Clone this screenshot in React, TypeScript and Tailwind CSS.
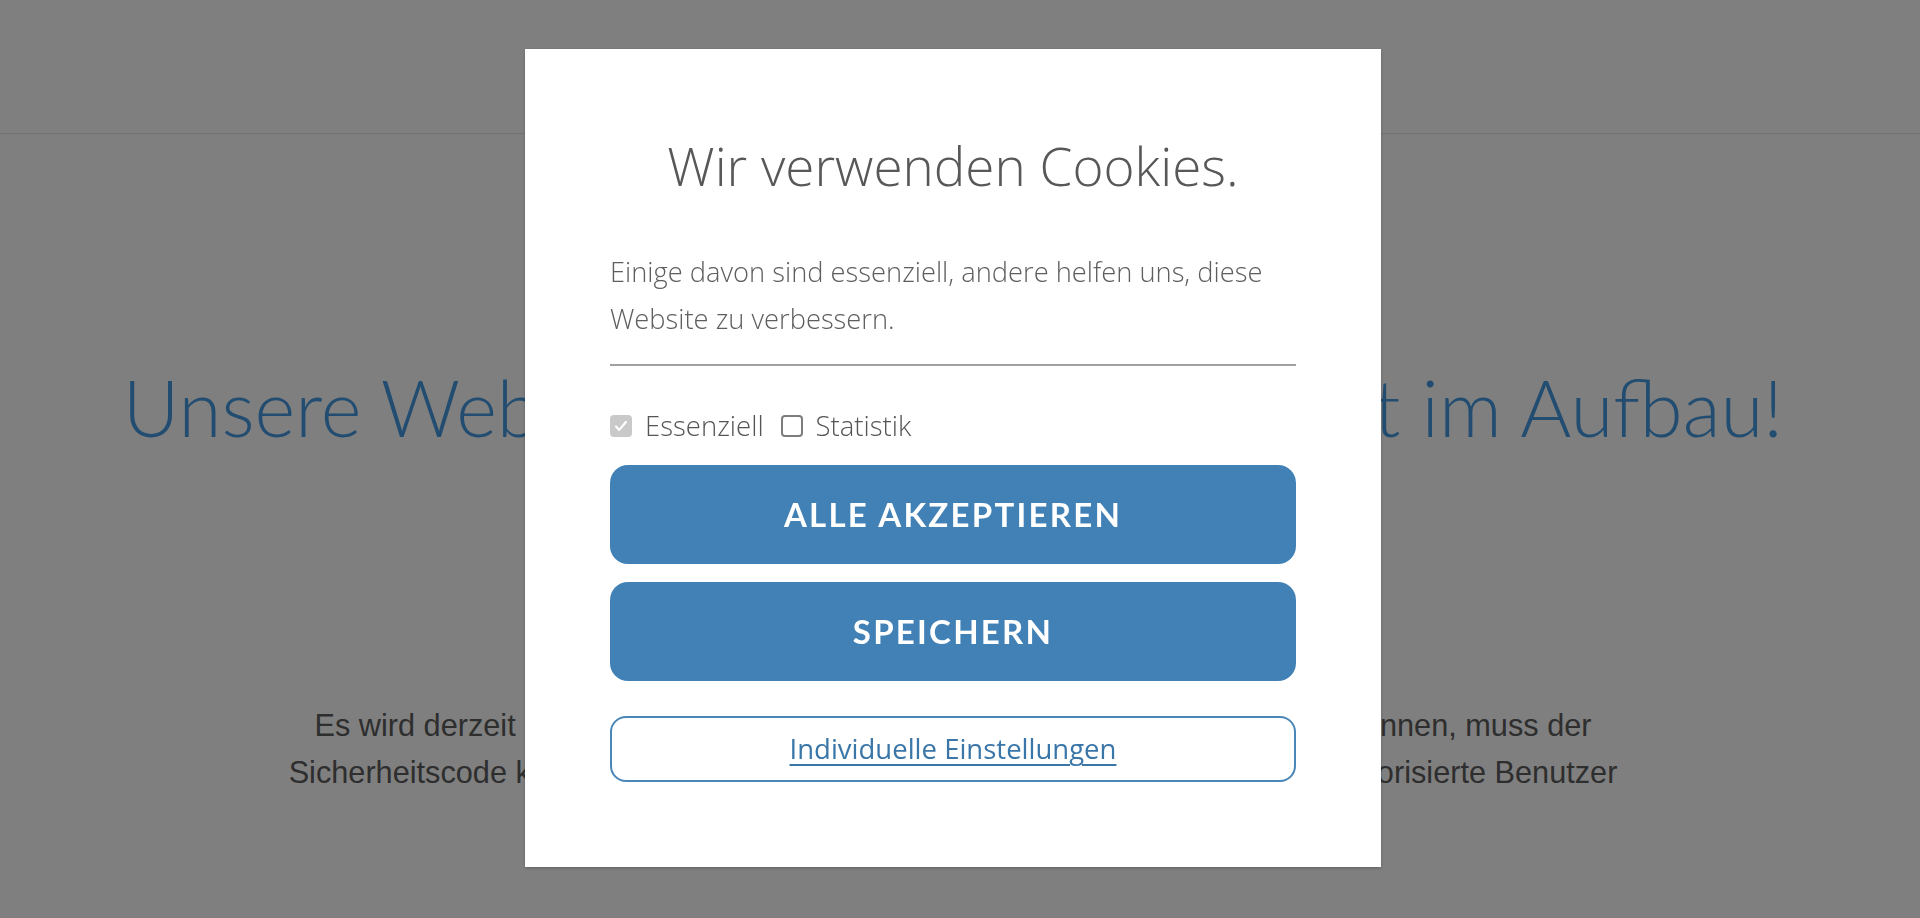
import React from 'react';

const CheckBox: React.FC<{ checked?: boolean; disabled?: boolean; label: string }> = ({ checked, disabled, label }) => {
  return (
    <label className="flex items-center gap-[13px]">
      {checked ? (
        <span className={`w-[22px] h-[22px] rounded-[4px] flex items-center justify-center ${disabled ? 'bg-[#c9c9c9]' : 'bg-[#4181b6]'}`}>
          <svg width="16" height="16" viewBox="0 0 16 16" fill="none">
            <path d="M3 8.5l3.2 3.4L13 4" stroke="#fff" strokeWidth="2.2" strokeLinecap="round" strokeLinejoin="round" />
          </svg>
        </span>
      ) : (
        <span className="w-[22px] h-[22px] rounded-[4px] border-2 border-[#7d7d7d] bg-white" />
      )}
      <span className="text-[27.5px] leading-[30px] font-light text-[#555]">{label}</span>
    </label>
  );
};

const App: React.FC = () => {
  return (
    <div className="relative min-h-[918px] bg-white overflow-hidden" style={{ fontFamily: '"Open Sans", sans-serif' }}>
      {/* page behind the overlay */}
      <header className="h-[134px] border-b border-[#e6e6e6]" />
      <main className="flex flex-col items-center pr-[14px]">
        <h1
          className="mt-[225px] text-[78px] leading-[96px] font-light text-[#449ae2] whitespace-nowrap"
          style={{ fontFamily: 'Lato, sans-serif' }}
        >
          Unsere Webseite befindet sich derzeit im Aufbau!
        </h1>
        <p
          className="mt-[247px] text-[30.7px] leading-[47px] text-[#5c5c5c] text-center whitespace-nowrap"
          style={{ fontFamily: '"Liberation Sans", Arial, sans-serif' }}
        >
          Es wird derzeit an unserer Webseite gearbeitet. Um die Seite betrachten zu können, muss der
          <br />
          Sicherheitscode korrekt eingegeben werden. Der Zutritt ist ausschließlich für autorisierte Benutzer
        </p>
      </main>

      {/* overlay */}
      <div className="fixed inset-0 bg-black/50 flex justify-center pt-[49px] pr-[14px]">
        <div className="w-[856px] h-[818px] bg-white shadow-[0_1px_3px_rgba(0,0,0,0.25)] px-[85px] pt-[87px] flex flex-col">
          <h2 className="text-[53px] leading-[60px] font-light text-[#585858] text-center">Wir verwenden Cookies.</h2>
          <p className="mt-[52px] text-[27.3px] leading-[47px] font-light text-[#5e5e5e]">
            Einige davon sind essenziell, andere helfen uns, diese Website zu verbessern.
          </p>
          <div className="mt-[22px] h-[2px] bg-[#a0a0a0]" />
          <div className="mt-[45px] flex items-center gap-[17px]">
            <CheckBox checked disabled label="Essenziell" />
            <CheckBox label="Statistik" />
          </div>
          <button
            className="mt-[24px] h-[99px] rounded-[18px] bg-[#4181b6] text-white text-[33px] font-bold tracking-[2.25px] flex items-center justify-center"
            style={{ fontFamily: 'Lato, sans-serif' }}
          >
            ALLE AKZEPTIEREN
          </button>
          <button
            className="mt-[18px] h-[99px] rounded-[18px] bg-[#4181b6] text-white text-[33px] font-bold tracking-[2.25px] flex items-center justify-center"
            style={{ fontFamily: 'Lato, sans-serif' }}
          >
            SPEICHERN
          </button>
          <button className="mt-[35px] h-[66px] rounded-[16px] border-2 border-[#4a86b8] bg-white flex items-center justify-center">
            <span className="text-[27.5px] text-[#3a76a8] underline underline-offset-[5px] decoration-[1.5px]">Individuelle Einstellungen</span>
          </button>
        </div>
      </div>
    </div>
  );
};

export default App;
